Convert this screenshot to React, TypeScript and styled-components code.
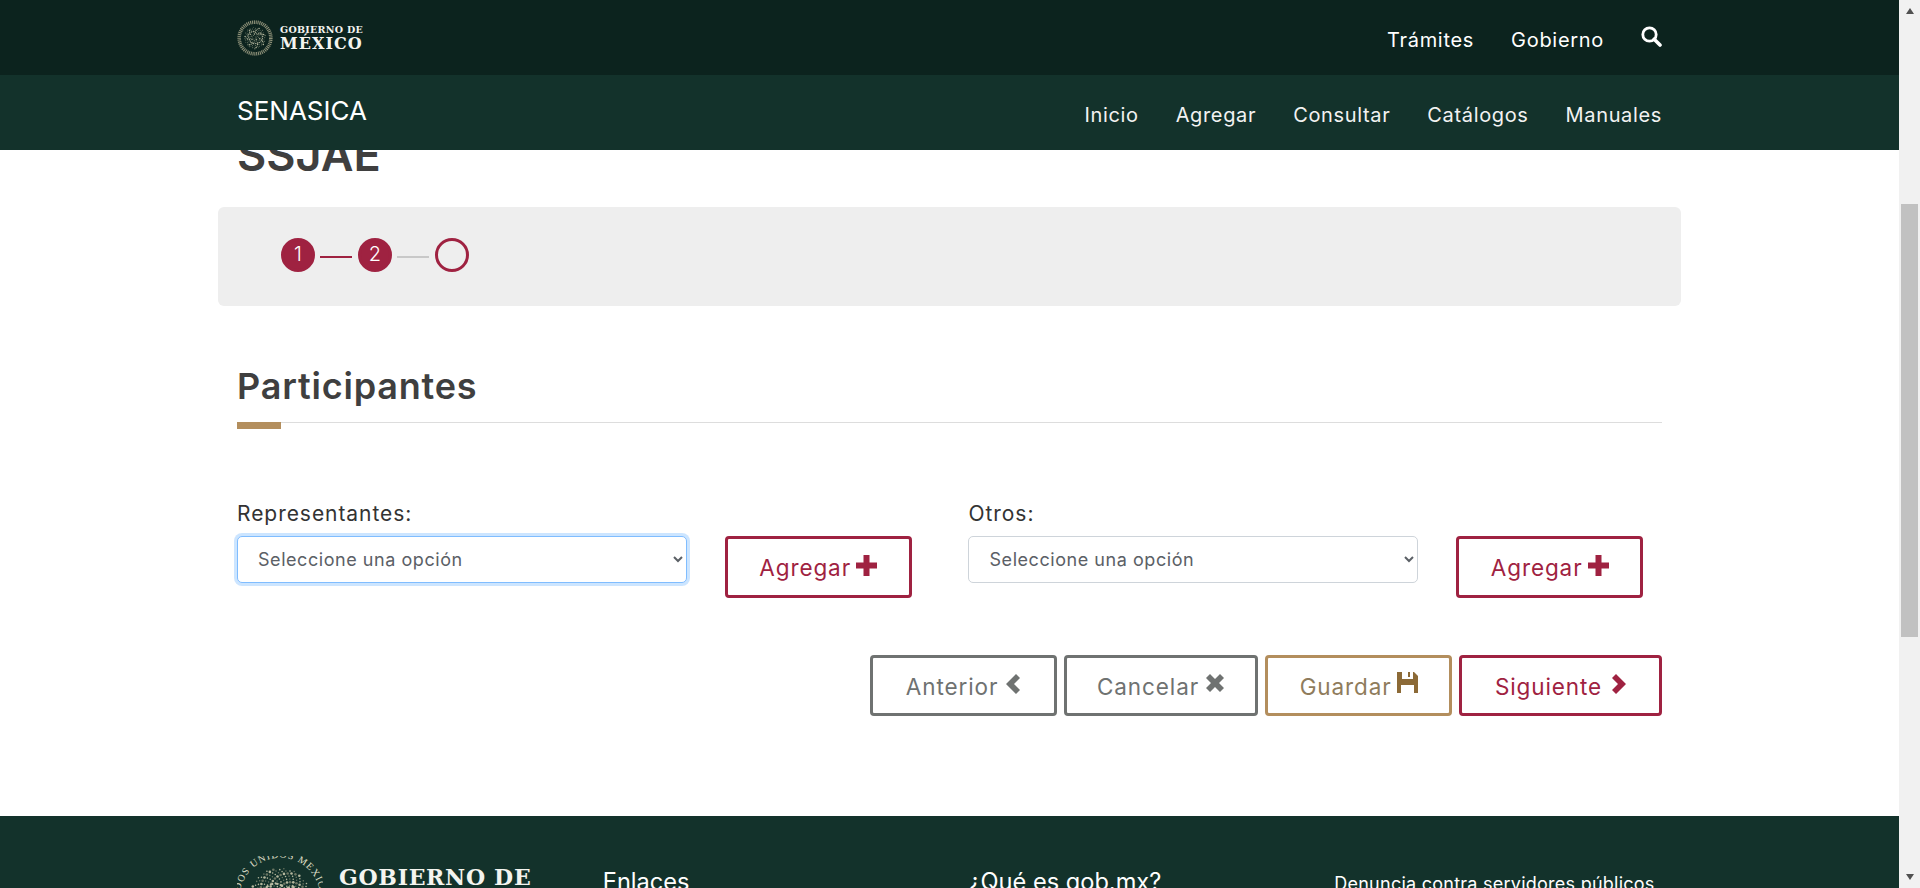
import React from "react";
import styled, { createGlobalStyle } from "styled-components";

const Global = createGlobalStyle`
  html, body { margin: 0; padding: 0; height: 100%; overflow: hidden; background: #fff; }
  body { font-family: Inter, "Noto Sans", "Liberation Sans", sans-serif; color: #3f3f3f; }
  * { box-sizing: border-box; }
`;

const WINE = "#9f2241";
const GOLD = "#b38e5d";
const GRAY = "#6f7271";

const Page = styled.div`display: flex; width: 1920px; height: 888px; overflow: hidden;`;
const Main = styled.div`flex: 1; min-width: 0; height: 888px; overflow: hidden; display: flex; flex-direction: column;`;
const Track = styled.div`width: 21px; height: 888px; background: #f1f1f1; display: flex; flex-direction: column; align-items: center; justify-content: space-between; flex: none; padding: 8px 0 8px;`;
const Thumb = styled.div`width: 17px; height: 433px; background: #c1c1c1; margin-top: 182px; margin-bottom: 229px;`;
const ArrowUp = styled.div`width: 0; height: 0; border-left: 4.5px solid transparent; border-right: 4.5px solid transparent; border-bottom: 6px solid #505050;`;
const ArrowDown = styled.div`width: 0; height: 0; border-left: 4.5px solid transparent; border-right: 4.5px solid transparent; border-top: 6px solid #505050;`;

const TopBar = styled.header`flex: none; height: 75px; background: #0c231e; padding: 0 237px; display: flex; align-items: center; justify-content: space-between; position: relative; z-index: 2;`;
const NavBar = styled.nav`flex: none; height: 75px; background: #13322b; padding: 0 237px; display: flex; justify-content: space-between; position: relative; z-index: 2;`;
const Logo = styled.div`display: flex; align-items: center; gap: 7px;`;
const LogoText = styled.div`display: flex; flex-direction: column; font-family: "DejaVu Serif", "Liberation Serif", serif; font-weight: 700; color: #f4f4ef;`;
const LogoSmall = styled.span`font-size: 9.5px; line-height: 12px; letter-spacing: 0.3px; white-space: nowrap;`;
const LogoBig = styled.span`font-size: 16px; line-height: 16px; letter-spacing: 1.05px; white-space: nowrap;`;
const TopLinks = styled.div`display: flex; align-items: center; gap: 37px;`;
const TopLink = styled.a`font-size: 20px; line-height: 24px; letter-spacing: 0.7px; color: #fff; margin-top: 5px;`;
const Brand = styled.a`font-size: 26px; font-weight: 400; line-height: 30px; letter-spacing: 0; color: #fff; margin-top: 21px;`;
const NavLinks = styled.div`display: flex; gap: 37px; margin-top: 28px;`;
const NavLink = styled.a`font-size: 20px; line-height: 24px; letter-spacing: 0.65px; color: #f2f2f2;`;

const Content = styled.main`flex: none; height: 666px; overflow: hidden; padding: 0 218px;`;
const Title = styled.h1`margin: -15px 0 0; padding: 0 19px; font-size: 45px; line-height: 40px; font-weight: 600; color: #3f3f3f; letter-spacing: 0;`;
const StepsPanel = styled.section`margin-top: 32px; height: 99px; background: #eee; border-radius: 6px; padding: 31px 63px 0; display: flex; align-items: flex-start;`;
const Step = styled.div<{ $open?: boolean }>`
  width: 34px; height: 34px; border-radius: 50%; flex: none;
  background: ${(p) => (p.$open ? "transparent" : WINE)};
  border: 3px solid ${WINE}; color: #fff; font-size: 20px; font-weight: 300; line-height: 27px; text-align: center;
`;
const StepLine = styled.div<{ $done?: boolean }>`
  width: 32px; height: 2px; flex: none; margin: 18px 6px 0 5px;
  background: ${(p) => (p.$done ? WINE : "#c8c8c8")};
`;
const Section = styled.section`padding: 0 19px;`;
const SectionTitle = styled.h2`margin: 60px 0 0; font-size: 36px; line-height: 40px; font-weight: 600; color: #3f3f3f; letter-spacing: 0.8px;`;
const Rule = styled.div`margin-top: 16px; height: 1px; background: #ddd; position: relative;`;
const RuleAccent = styled.div`position: absolute; left: 0; top: 0; width: 44px; height: 7px; background: ${GOLD};`;
const FormRow = styled.div`display: grid; grid-template-columns: 4fr 2fr 4fr 2fr; margin: 79px 0 0;`;
const Col = styled.div`padding: 0 19px;`;
const ButtonCol = styled(Col)`padding-top: 34px;`;
const Label = styled.label`display: block; font-size: 21px; line-height: 24px; color: #333; letter-spacing: 0.95px; margin: 0 0 10px 0;`;
const Select = styled.select<{ $focus?: boolean }>`
  display: block; width: 100%; height: 47px; padding: 0 16px; background: #fff; font: inherit; font-size: 18px; letter-spacing: 0.55px; color: #5b6066;
  border-radius: 5px; outline: none;
  border: 1px solid ${(p) => (p.$focus ? "#80bdff" : "#ced4da")};
  box-shadow: ${(p) => (p.$focus ? "0 0 0 3px rgba(0,123,255,.2)" : "none")};
`;
const Action = styled.button<{ $c: string; $t: string; $w: number }>`
  width: ${(p) => p.$w}px; height: 61.5px; flex: none; background: #fff; border: 3px solid ${(p) => p.$c}; border-radius: 4px; color: ${(p) => p.$t};
  font: inherit; font-size: 22.5px; letter-spacing: 0.9px; display: flex; align-items: center; justify-content: center; gap: 5px; padding: 2px 0 0 0;
`;
const Actions = styled.div`display: flex; justify-content: flex-end; gap: 6.6px; margin-top: 57px;`;
const Ico = styled.svg<{ $lift: number; $left?: number }>`
  flex: none; display: block; margin-top: -${(p) => p.$lift}px; margin-left: ${(p) => p.$left ?? 0}px;
`;

const Footer = styled.footer`flex: none; height: 200px; background: #13322b; padding: 0 218px; display: grid; grid-template-columns: repeat(4, 1fr); color: #fff;`;
const FootCol = styled.div`padding: 40px 19px 0; position: relative;`;
const FootLogo = styled.div`display: flex; gap: 16px;`;
const FootLogoText = styled.div`font-family: "DejaVu Serif", "Liberation Serif", serif; font-weight: 700; font-size: 22px; line-height: 28px; letter-spacing: 0.7px; color: #f4f4ef; white-space: nowrap; margin-top: 7px;`;
const FootHead = styled.h3`margin: 11px 0 0; font-size: 23.6px; font-weight: 400; line-height: 30px; letter-spacing: 0;`;
const FootLink = styled.a`display: block; margin-top: 16px; font-size: 18px; line-height: 24px; letter-spacing: 0.25px; white-space: nowrap;`;

function Emblem({ size, ring }: { size: number; ring?: boolean }) {
  const dots = [];
  const n = ring ? 300 : 110;
  for (let i = 0; i < n; i++) {
    const a = i * 2.399963;
    const r = Math.sqrt((i + 1) / n) * (ring ? 36 : 30);
    dots.push(
      <circle
        key={i}
        cx={50 + Math.cos(a) * r}
        cy={50 + Math.sin(a) * r}
        r={ring ? (i % 3 === 0 ? 1.5 : 0.9) : i % 3 === 0 ? 2.1 : 1.3}
        fill={i % 2 ? "#b4b79d" : "#6a7562"}
      />
    );
  }
  return (
    <svg width={size} height={size} viewBox="0 0 100 100" style={{ flex: "none", display: "block" }}>
      <defs><path id={ring ? "e2" : "e1"} d="M 9 72 A 47 47 0 1 1 91 72" /></defs>
      {!ring && <circle cx="50" cy="50" r="44" fill="none" stroke="#8d9078" strokeWidth="10" strokeDasharray="3 2.2" />}
      {ring && (
        <text fontSize="11.5" fill="#e0e0cd" fontFamily="Liberation Serif, serif" letterSpacing="1.2">
          <textPath href="#e2">ESTADOS UNIDOS MEXICANOS</textPath>
        </text>
      )}
      {dots}
      <path d="M30 42 C38 28 52 30 56 40 C64 30 74 38 70 54 C66 64 50 70 38 62 Z" fill="none" stroke="#b9bca3" strokeWidth="2.4" strokeDasharray="4 2" />
    </svg>
  );
}

const Plus = ({ c }: { c: string }) => (
  <Ico $lift={4} width="21" height="21" viewBox="0 0 21 21"><path fill={c} d="M7.5 0h6v7.5H21v6h-7.5V21h-6v-7.5H0v-6h7.5z" /></Ico>
);
const ChevL = ({ c }: { c: string }) => (
  <Ico $lift={5} $left={3} width="15" height="20" viewBox="0 0 15 20"><path fill={c} d="M10 0l4 4-6 6 6 6-4 4L0 10z" /></Ico>
);
const ChevR = ({ c }: { c: string }) => (
  <Ico $lift={5} $left={4} width="15" height="20" viewBox="0 0 15 20"><path fill={c} d="M5 0L1 4l6 6-6 6 4 4 10-10z" /></Ico>
);
const Cross = ({ c }: { c: string }) => (
  <Ico $lift={6} $left={1} width="20" height="20" viewBox="0 0 20 20"><path fill={c} d="M5 1l5 5 5-5 4 4-5 5 5 5-4 4-5-5-5 5-4-4 5-5-5-5z" /></Ico>
);
const Floppy = ({ c }: { c: string }) => (
  <Ico $lift={8} width="21" height="21" viewBox="0 0 21 21"><path fill={c} fillRule="evenodd" d="M0 0h17l4 4v17h-4v-8H4v8H0zM5 0v7h11V0h-3v5h-2V0z" /></Ico>
);

export default function App() {
  return (
    <Page>
      <Global />
      <Main>
        <TopBar>
          <Logo>
            <Emblem size={36} />
            <LogoText>
              <LogoSmall>GOBIERNO DE</LogoSmall>
              <LogoBig>MÉXICO</LogoBig>
            </LogoText>
          </Logo>
          <TopLinks>
            <TopLink>Trámites</TopLink>
            <TopLink>Gobierno</TopLink>
            <svg width="21" height="21" viewBox="0 0 21 21" style={{ marginTop: -3 }}>
              <circle cx="8.5" cy="8.5" r="6.7" fill="none" stroke="#fff" strokeWidth="2.8" />
              <path d="M13.2 13.2L19 19" stroke="#fff" strokeWidth="3.6" strokeLinecap="round" />
            </svg>
          </TopLinks>
        </TopBar>
        <NavBar>
          <Brand>SENASICA</Brand>
          <NavLinks>
            <NavLink>Inicio</NavLink>
            <NavLink>Agregar</NavLink>
            <NavLink>Consultar</NavLink>
            <NavLink>Catálogos</NavLink>
            <NavLink>Manuales</NavLink>
          </NavLinks>
        </NavBar>
        <Content>
          <Title>SSJAE</Title>
          <StepsPanel>
            <Step>1</Step>
            <StepLine $done />
            <Step>2</Step>
            <StepLine />
            <Step $open />
          </StepsPanel>
          <Section>
            <SectionTitle>Participantes</SectionTitle>
            <Rule><RuleAccent /></Rule>
          </Section>
          <FormRow>
            <Col>
              <Label>Representantes:</Label>
              <Select $focus defaultValue="a"><option value="a">Seleccione una opción</option></Select>
            </Col>
            <ButtonCol>
              <Action $c={WINE} $t={WINE} $w={187}>Agregar <Plus c={WINE} /></Action>
            </ButtonCol>
            <Col>
              <Label>Otros:</Label>
              <Select defaultValue="a"><option value="a">Seleccione una opción</option></Select>
            </Col>
            <ButtonCol>
              <Action $c={WINE} $t={WINE} $w={187}>Agregar <Plus c={WINE} /></Action>
            </ButtonCol>
          </FormRow>
          <Section>
            <Actions>
              <Action $c={GRAY} $t={GRAY} $w={187}>Anterior <ChevL c={GRAY} /></Action>
              <Action $c={GRAY} $t={GRAY} $w={194.6}>Cancelar <Cross c={GRAY} /></Action>
              <Action $c={GOLD} $t="#8f7c5c" $w={187.5}>Guardar <Floppy c="#8c6a37" /></Action>
              <Action $c={WINE} $t={WINE} $w={203}>Siguiente <ChevR c={WINE} /></Action>
            </Actions>
          </Section>
        </Content>
        <Footer>
          <FootCol>
            <FootLogo>
              <Emblem size={86} ring />
              <FootLogoText>GOBIERNO DE</FootLogoText>
            </FootLogo>
          </FootCol>
          <FootCol><FootHead>Enlaces</FootHead></FootCol>
          <FootCol><FootHead>¿Qué es gob.mx?</FootHead></FootCol>
          <FootCol><FootLink>Denuncia contra servidores públicos</FootLink></FootCol>
        </Footer>
      </Main>
      <Track>
        <ArrowUp />
        <Thumb />
        <ArrowDown />
      </Track>
    </Page>
  );
}
